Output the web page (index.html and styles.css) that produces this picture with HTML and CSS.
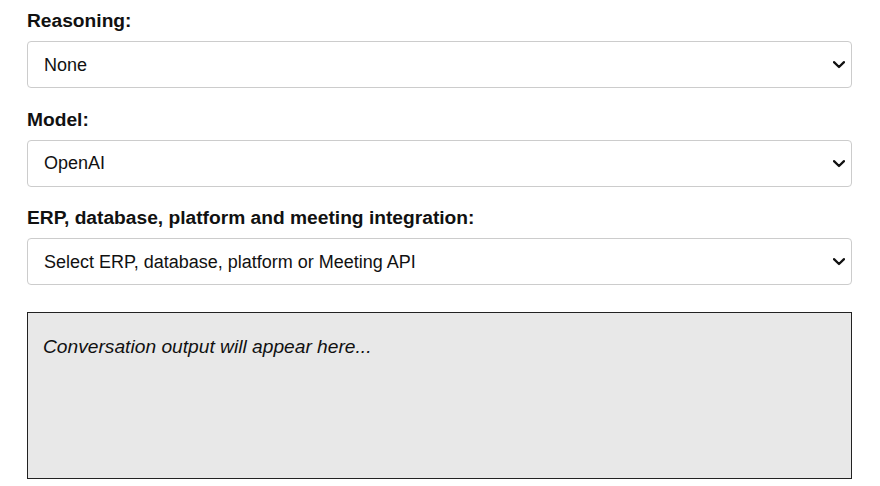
FILE: index.html
```html
<!DOCTYPE html>
<html lang="en">
<head>
<meta charset="utf-8">
<title>Conversation</title>
<link rel="stylesheet" href="styles.css">
</head>
<body>
<div class="panel">
  <div class="field">
    <label class="field-label" for="reasoning">Reasoning:</label>
    <div class="select-wrap">
      <select id="reasoning" class="field-select">
        <option>None</option>
      </select>
      <svg class="chevron" width="12" height="8" viewBox="0 0 12 8" aria-hidden="true"><path d="M1 1.2 L6 6 L11 1.2" fill="none" stroke="#111" stroke-width="2.3" stroke-linecap="round" stroke-linejoin="round"/></svg>
    </div>
  </div>
  <div class="field">
    <label class="field-label" for="model">Model:</label>
    <div class="select-wrap">
      <select id="model" class="field-select">
        <option>OpenAI</option>
      </select>
      <svg class="chevron" width="12" height="8" viewBox="0 0 12 8" aria-hidden="true"><path d="M1 1.2 L6 6 L11 1.2" fill="none" stroke="#111" stroke-width="2.3" stroke-linecap="round" stroke-linejoin="round"/></svg>
    </div>
  </div>
  <div class="field field-last">
    <label class="field-label" for="integration">ERP, database, platform and meeting integration:</label>
    <div class="select-wrap">
      <select id="integration" class="field-select">
        <option>Select ERP, database, platform or Meeting API</option>
      </select>
      <svg class="chevron" width="12" height="8" viewBox="0 0 12 8" aria-hidden="true"><path d="M1 1.2 L6 6 L11 1.2" fill="none" stroke="#111" stroke-width="2.3" stroke-linecap="round" stroke-linejoin="round"/></svg>
    </div>
  </div>
  <div class="output">Conversation output will appear here...</div>
</div>
</body>
</html>
```
FILE: styles.css
```css
html, body {
  margin: 0;
  padding: 0;
  background: #ffffff;
}
body {
  font-family: "Liberation Sans", Arial, sans-serif;
  color: #111111;
}
.panel {
  padding: 10px 28px 0 27px;
  display: flex;
  flex-direction: column;
}
.field {
  display: flex;
  flex-direction: column;
  margin-bottom: 20.5px;
}
.field-last {
  margin-bottom: 27px;
}
.field-label {
  display: block;
  font-weight: bold;
  font-size: 19.2px;
  line-height: 22px;
  margin-bottom: 9px;
}
.select-wrap {
  position: relative;
}
.field-select {
  display: block;
  width: 100%;
  height: 47px;
  box-sizing: border-box;
  padding: 0 30px 0 16px;
  font-family: "Liberation Sans", Arial, sans-serif;
  font-size: 18px;
  color: #111111;
  background: #ffffff;
  border: 1px solid #cccccc;
  border-radius: 4px;
  appearance: none;
  -webkit-appearance: none;
}
.chevron {
  position: absolute;
  right: 7px;
  top: 20px;
  pointer-events: none;
}
.output {
  height: 167px;
  box-sizing: border-box;
  padding: 23px 15px;
  background: #e8e8e8;
  border: 1px solid #222222;
  font-style: italic;
  font-size: 19.2px;
  line-height: 22px;
}
```
